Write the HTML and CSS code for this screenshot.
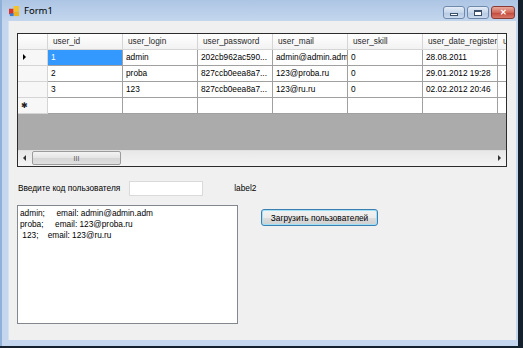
FILE: index.html
```html
<!DOCTYPE html>
<html lang="ru">
<head>
    <meta charset="UTF-8">
    <title>Form1</title>
    <link rel="stylesheet" href="styles.css">
</head>
<body>
    <div class="window">
        <div class="titlebar">
            <svg class="app-icon" width="11" height="11" viewBox="0 0 12 12">
                <rect x="0" y="3" width="5" height="6" fill="#d8322a"/>
                <rect x="5" y="0" width="6" height="6" fill="#f2c230"/>
                <rect x="5" y="6" width="6" height="5" fill="#e9b21e"/>
                <rect x="1" y="8" width="4" height="3" fill="#3a7bd5"/>
            </svg>
            <span class="title">Form1</span>
            <div class="caption-buttons">
                <div class="cap-btn"><span class="min-glyph"></span></div>
                <div class="cap-btn"><span class="max-glyph"></span></div>
                <div class="cap-btn close"><span class="close-glyph">✕</span></div>
            </div>
        </div>
        <div class="frame">
            <div class="client">
                <div class="grid-view">
                    <div class="grid-rows">
                        <div class="row header">
                            <div class="rh"></div>
                            <div class="cell">user_id</div>
                            <div class="cell">user_login</div>
                            <div class="cell">user_password</div>
                            <div class="cell">user_mail</div>
                            <div class="cell">user_skill</div>
                            <div class="cell">user_date_register</div>
                            <div class="cell">u</div>
                        </div>
                        <div class="row">
                            <div class="rh"><span class="arrow"></span></div>
                            <div class="cell selected">1</div>
                            <div class="cell">admin</div>
                            <div class="cell">202cb962ac590...</div>
                            <div class="cell">admin@admin.adm</div>
                            <div class="cell">0</div>
                            <div class="cell">28.08.2011</div>
                            <div class="cell"></div>
                        </div>
                        <div class="row">
                            <div class="rh"></div>
                            <div class="cell">2</div>
                            <div class="cell">proba</div>
                            <div class="cell">827ccb0eea8a7...</div>
                            <div class="cell">123@proba.ru</div>
                            <div class="cell">0</div>
                            <div class="cell">29.01.2012 19:28</div>
                            <div class="cell"></div>
                        </div>
                        <div class="row">
                            <div class="rh"></div>
                            <div class="cell">3</div>
                            <div class="cell">123</div>
                            <div class="cell">827ccb0eea8a7...</div>
                            <div class="cell">123@ru.ru</div>
                            <div class="cell">0</div>
                            <div class="cell">02.02.2012 20:46</div>
                            <div class="cell"></div>
                        </div>
                        <div class="row">
                            <div class="rh star">✱</div>
                            <div class="cell"></div>
                            <div class="cell"></div>
                            <div class="cell"></div>
                            <div class="cell"></div>
                            <div class="cell"></div>
                            <div class="cell"></div>
                            <div class="cell"></div>
                        </div>
                    </div>
                    <div class="grid-empty"></div>
                    <div class="hscroll">
                        <div class="sb-arrow left"></div>
                        <div class="sb-thumb"><span class="grip">III</span></div>
                        <div class="sb-track"></div>
                        <div class="sb-arrow right"></div>
                    </div>
                </div>

                <div class="form-row">
                    <span class="label">Введите код пользователя</span>
                    <div class="textbox"></div>
                    <span class="label label2">label2</span>
                </div>

                <div class="bottom-row">
                    <div class="listbox">admin;     email: admin@admin.adm
proba;     email: 123@proba.ru
 123;    email: 123@ru.ru</div>
                    <button class="load-button">Загрузить пользователей</button>
                </div>
            </div>
        </div>
    </div>
</body>
</html>
```

FILE: styles.css
```css
body {
    margin: 0;
    width: 523px;
    height: 348px;
    overflow: hidden;
    background: #14202c;
    font-family: "Liberation Sans", Arial, sans-serif;
    font-size: 8.3px;
}

.window {
    width: 518px;
    height: 346px;
    display: flex;
    flex-direction: column;
    background: #c4d7ee;
    border-left: 2px solid #8fb0d9;
    box-sizing: border-box;
}

.titlebar {
    height: 21px;
    display: flex;
    align-items: center;
    padding-left: 7px;
    background: linear-gradient(#adc5e4, #c3d6ed);
}

.app-icon {
    margin-top: 1px;
}

.title {
    margin-left: 4px;
    font-family: "Noto Sans", "Open Sans", sans-serif;
    font-size: 9.5px;
    color: #000;
}

.caption-buttons {
    margin-left: auto;
    margin-right: 3px;
    display: flex;
    gap: 2px;
    align-self: flex-start;
    margin-top: 6px;
}

.cap-btn {
    width: 22px;
    height: 13px;
    border: 1px solid #6f89ad;
    border-radius: 3px;
    background: linear-gradient(#e6eef8, #c5d5ea 50%, #b4c8e2 51%, #cbdaee);
    display: flex;
    align-items: center;
    justify-content: center;
    box-sizing: border-box;
}

.cap-btn.close {
    width: 24px;
    border-color: #8a3a34;
    background: linear-gradient(#e9a99c, #d0685a 50%, #c1463a 51%, #d87868);
}

.min-glyph {
    width: 6px;
    height: 1px;
    margin-top: 4px;
    background: #fff;
    border: 1px solid #3c4f6b;
}

.max-glyph {
    width: 6px;
    height: 3px;
    border: 1px solid #3c4f6b;
    border-top-width: 2px;
    background: #fff;
}

.close-glyph {
    color: #fff;
    font-size: 8px;
    font-weight: bold;
    line-height: 1;
}

.frame {
    flex: 1;
    display: flex;
    padding: 0 2px 6px 6px;
}

.client {
    flex: 1;
    background: #f0f0f0;
    padding: 12px 0 0 8px;
    border-left: 1px solid #d6e2f1;
}

.grid-view {
    width: 490px;
    height: 134px;
    border: 1px solid #2b2b2b;
    box-sizing: border-box;
    display: flex;
    flex-direction: column;
    overflow: hidden;
    color: #000;
}

.row {
    display: grid;
    grid-template-columns: 30px repeat(6, 75px) 40px;
    height: 16px;
}

.row .cell,
.row .rh {
    height: 16px;
    line-height: 15px;
    box-sizing: border-box;
    border-right: 1px solid #a0a0a0;
    border-bottom: 1px solid #a0a0a0;
    padding-left: 3px;
    background: #fff;
    white-space: nowrap;
    overflow: hidden;
}

.row .rh {
    background: #f7f7f7;
    border-right-color: #d5d5d5;
    border-bottom-color: #d5d5d5;
    position: relative;
}

.row.header .cell {
    padding-left: 5px;
    background: linear-gradient(#ffffff, #f2f2f2);
    border-right-color: #d5d5d5;
    border-bottom-color: #d5d5d5;
    color: #2a2a2a;
}

.row.header .rh {
    background: linear-gradient(#ffffff, #f2f2f2);
}

.cell.selected {
    background: #3399ff;
    color: #fff;
}

.arrow {
    position: absolute;
    left: 5px;
    top: 4px;
    width: 0;
    height: 0;
    border-top: 3px solid transparent;
    border-bottom: 3px solid transparent;
    border-left: 3px solid #000;
}

.rh.star {
    padding-left: 3px;
    font-family: "DejaVu Sans", sans-serif;
    font-size: 8px;
    line-height: 16px;
    color: #222;
}

.grid-empty {
    flex: 1;
    background: #ababab;
}

.hscroll {
    height: 15px;
    display: flex;
    background: linear-gradient(#e8e8e8, #f4f4f4);
    border-top: 1px solid #e2e2e2;
}

.sb-arrow {
    width: 14px;
    position: relative;
}

.sb-arrow.left::after,
.sb-arrow.right::after {
    content: "";
    position: absolute;
    top: 4px;
    border-top: 3px solid transparent;
    border-bottom: 3px solid transparent;
}

.sb-arrow.left::after {
    left: 5px;
    border-right: 3px solid #333;
}

.sb-arrow.right::after {
    left: 6px;
    border-left: 3px solid #333;
}

.sb-thumb {
    width: 89px;
    margin: 0 0 1px 0;
    border: 1px solid #9c9c9c;
    border-radius: 2px;
    background: linear-gradient(#f4f4f4, #e4e4e4 50%, #d6d6d6 51%, #e0e0e0);
    display: flex;
    align-items: center;
    justify-content: center;
    box-sizing: border-box;
}

.grip {
    font-size: 7px;
    letter-spacing: 0;
    color: #555;
}

.sb-track {
    flex: 1;
}

.form-row {
    display: flex;
    align-items: center;
    margin-top: 13px;
    height: 16px;
}

.label {
    margin-left: 1px;
    color: #000;
}

.textbox {
    width: 74px;
    height: 15px;
    margin-left: 9px;
    background: #fff;
    border: 1px solid #dadada;
    box-sizing: border-box;
}

.label2 {
    margin-left: 31px;
}

.bottom-row {
    display: flex;
    align-items: flex-start;
    margin-top: 9px;
}

.listbox {
    width: 221px;
    height: 119px;
    box-sizing: border-box;
    background: #fff;
    border: 1px solid #828790;
    padding: 2px 0 0 2px;
    white-space: pre;
    line-height: 11px;
    color: #000;
}

.load-button {
    margin: 4px 0 0 23px;
    width: 117px;
    height: 17px;
    padding: 0;
    font-family: "Liberation Sans", Arial, sans-serif;
    font-size: 8.3px;
    color: #000;
    border: 1px solid #3c7fb1;
    border-radius: 3px;
    background: linear-gradient(#f2f2f2, #ebebeb 50%, #dddddd 51%, #cfcfcf);
    box-shadow: inset 0 0 0 1px #9fe0f7;
}
```
